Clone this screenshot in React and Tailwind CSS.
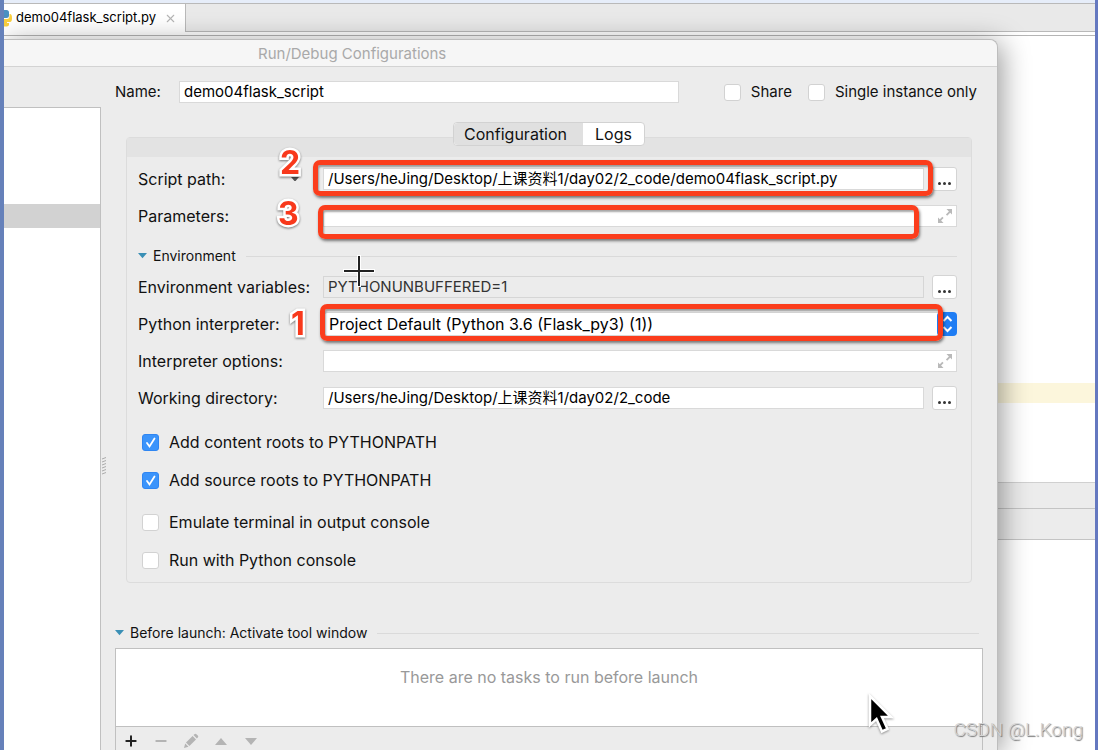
import React, { useState } from "react";
import { Plus, Minus, X } from "lucide-react";

// Text box shared by all rows of the form
const fieldStyle =
  "h-[22px] min-w-0 flex-1 border border-[#d9d9d9] bg-white px-1 pt-px text-[15px] text-black outline-none";

const PythonIcon = () => (
  <svg width="8" height="18" viewBox="0 0 8 18" aria-hidden="true">
    <path d="M0 1h2.500Q5 1 5 3.500V7q0 2-2.500 2H0z" fill="#4a90c2" />
    <path d="M5.500 5H6q2 0 2 4t-2 4H3v1h2v1.500Q5 18 0 17.500V10h3q2.500 0 2.500-3z" fill="#f9cf3e" />
  </svg>
);

const ExpandIcon = () => (
  <svg width="16" height="16" viewBox="0 0 16 16" fill="#b9b9b9" aria-hidden="true">
    <path d="M9.500 1H15v5.500l-1.800-1.800-3 3-1.300-1.300 3-3z" />
    <path d="M6.500 15H1V9.500l1.800 1.800 2.500-2.500 1.300 1.300-2.500 2.500z" />
  </svg>
);

const PencilIcon = () => (
  <svg width="16" height="16" viewBox="0 0 16 16" fill="#b4b4b4" aria-hidden="true">
    <path d="M1 15l1.200-4.500 3.300 3.300zM3 9.600l6.600-6.600 3.400 3.400-6.600 6.600zM10.500 2.100l.9-.9q1-1 2 0l1.400 1.400q1 1 0 2l-.9.9z" />
  </svg>
);

const Triangle = ({ up, className }) => (
  <svg viewBox="0 0 12 7" className={className} fill="currentColor" aria-hidden="true">
    <path d={up ? "M0 7h12L6 0z" : "M0 0h12L6 7z"} />
  </svg>
);

const Check = ({ label, checked = false }) => {
  const [on, setOn] = useState(checked);
  return (
    <label className="flex h-5 items-center gap-2.5 whitespace-nowrap">
      <span className="relative flex">
        <input
          type="checkbox"
          checked={on}
          onChange={() => setOn(!on)}
          className="size-[17px] appearance-none rounded-[3px] border border-[#d2d2d2] bg-white checked:border-[#2f86f2] checked:bg-[#3b94fb]"
        />
        {on && (
          <svg viewBox="0 0 17 17" className="pointer-events-none absolute inset-0" aria-hidden="true">
            <path d="M5 9l2.500 3.500 5-8" fill="none" stroke="white" strokeWidth="1.800" strokeLinecap="round" />
          </svg>
        )}
      </span>
      <span>{label}</span>
    </label>
  );
};

const Row = ({ id, label, children }) => (
  <div className="flex h-6 items-center">
    <label htmlFor={id} className="w-[185px] shrink-0 whitespace-nowrap">
      {label}
    </label>
    <div className="relative flex min-w-0 flex-1 items-center gap-2">{children}</div>
  </div>
);

const BrowseButton = ({ label }) => (
  <button
    aria-label={label}
    className="flex h-6 w-[25px] shrink-0 items-center justify-center gap-0.5 rounded-[3px] border border-[#d4d4d4] bg-white pt-2"
  >
    <i className="size-[3px] rounded-full bg-[#333]" />
    <i className="size-[3px] rounded-full bg-[#333]" />
    <i className="size-[3px] rounded-full bg-[#333]" />
  </button>
);

const Frame = ({ className }) => (
  <div
    className={`pointer-events-none absolute z-10 rounded-[7px] border-[5px] border-[#fb3d1c] shadow-[1px_2px_3px_rgba(0,0,0,0.5),inset_1px_2px_2px_rgba(0,0,0,0.35)] ${className}`}
  />
);

const Step = ({ n, className }) => (
  <span
    className={`pointer-events-none absolute z-10 text-[32px] leading-8 font-bold text-[#f8391c] [paint-order:stroke] [-webkit-text-stroke:5px_white] [filter:drop-shadow(0_1px_1px_rgba(0,0,0,0.5))] ${className}`}
  >
    {n}
  </span>
);

const Heading = ({ children }) => (
  <div className="flex h-5 items-center gap-1.5 text-sm">
    <Triangle className="w-[9px] text-[#3a8fb5]" />
    <span className="whitespace-nowrap">{children}</span>
    <span className="ml-1 h-px flex-1 bg-[#dadada]" />
  </div>
);

const App = () => {
  const [name, setName] = useState("demo04flask_script");
  const [script, setScript] = useState("/Users/heJing/Desktop/上课资料1/day02/2_code/demo04flask_script.py");
  const [params, setParams] = useState("");
  const [options, setOptions] = useState("");
  const [workDir, setWorkDir] = useState("/Users/heJing/Desktop/上课资料1/day02/2_code");

  return (
    <div className="relative flex h-screen flex-col overflow-hidden border-r-[3px] border-l-4 border-r-[#6478c0] border-l-[#6681ba] bg-white font-['Inter','Noto_Sans_CJK_SC',sans-serif] text-[15px] text-[#111]">
      {/* Editor tabs */}
      <div className="h-[3px] shrink-0 bg-[#e6edf9]" />
      <div className="flex h-[29px] shrink-0 border-t border-b border-[#b9b9b9] bg-[#e9e9e9]">
        <div className="flex h-7 items-center gap-1 border-r border-[#b9b9b9] bg-white pr-2 text-[13px] text-black">
          <PythonIcon />
          <span className="whitespace-nowrap">demo04flask_script.py</span>
          <button aria-label="Close tab" className="ml-1 text-[#b5b5b5]">
            <X size={13} strokeWidth={2} />
          </button>
        </div>
      </div>
      <div className="h-1 shrink-0 border-b border-[#b5b5b5] bg-white" />

      <div className="flex min-h-0 flex-1">
        {/* Dialog */}
        <div className="z-10 mt-[3px] flex min-w-0 flex-1 flex-col rounded-tr-lg border-t border-r border-[#bdbdbd] bg-[#ececec] shadow-[4px_4px_28px_rgba(0,0,0,0.4)]">
          <div className="flex h-[27px] shrink-0 items-center rounded-tr-lg border-b border-[#d3d3d3] bg-[#f6f6f6] pt-0.5 pl-[254px] text-[#a9a9a9]">
            Run/Debug Configurations
          </div>

          <div className="flex min-h-0 flex-1">
            <aside className="flex w-[97px] shrink-0 flex-col pt-10">
              <div className="flex-1 border-t border-r border-[#c0c0c0] bg-white pt-24">
                <div className="h-6 bg-[#d2d2d2]" />
              </div>
            </aside>
            <div className="flex w-1.5 shrink-0 justify-center pt-[390px]">
              <svg width="5" height="18" viewBox="0 0 5 18" aria-hidden="true">
                <path d="M0 2l4-1.500M0 5l4-1.500M0 8l4-1.500M0 11l4-1.500M0 14l4-1.500M0 17l4-1.500" stroke="#aaa" />
              </svg>
            </div>

            <main className="flex min-w-0 flex-1 flex-col pt-[13px] pr-3.5 pl-2">
              <div className="flex h-6 shrink-0 items-center">
                <label htmlFor="name" className="w-16 shrink-0 pt-px">Name:</label>
                <input id="name" value={name} onChange={(e) => setName(e.target.value)} className={fieldStyle} />
                <div className="mr-1.5 ml-[45px] flex gap-4">
                  <Check label="Share" />
                  <Check label="Single instance only" />
                </div>
              </div>

              {/* Tabs sit on the upper edge of the panel */}
              <div className="z-10 mt-[18px] flex h-6 shrink-0 self-center rounded-[4px] border border-[#d2d2d2] bg-white text-base leading-[22px]">
                <button className="rounded-l-[4px] bg-[#e0e0e0] pr-4 pl-2.5">Configuration</button>
                <button className="px-3">Logs</button>
              </div>

              <section className="mx-[11px] -mt-[9px] shrink-0 rounded-[4px] border border-[#dcdcdc] pb-3 text-base">
                <div className="h-[19px] bg-[#e3e3e3]" />
                <div className="pt-2.5 pr-3.5 pl-[11px]">
                  <div className="flex flex-col gap-[13px]">
                    <Row id="script" label="Script path:">
                      <Triangle className="absolute -left-8 w-2 text-[#555]" />
                      <Step n="2" className="-top-5 -left-[43px]" />
                      <input id="script" value={script} onChange={(e) => setScript(e.target.value)} className={fieldStyle} />
                      <BrowseButton label="Browse script" />
                      <Frame className="-top-[7px] right-6 -left-2.5 h-9" />
                    </Row>
                    <Row id="params" label="Parameters:">
                      <Step n="3" className="-top-[7px] -left-[45px]" />
                      <input id="params" value={params} onChange={(e) => setParams(e.target.value)} className={fieldStyle} />
                      <button aria-label="Expand parameters" className="absolute right-1">
                        <ExpandIcon />
                      </button>
                      <Frame className="top-0 right-[38px] -left-[5px] h-[34px]" />
                    </Row>
                  </div>

                  <div className="mt-[18px] mb-[9px]">
                    <Heading>Environment</Heading>
                  </div>

                  <div className="flex flex-col gap-[13px]">
                    <Row id="env" label="Environment variables:">
                      <input
                        id="env"
                        readOnly
                        value="PYTHONUNBUFFERED=1"
                        className="h-[22px] min-w-0 flex-1 border border-[#d6d6d6] px-1 text-[15px] text-[#333] outline-none"
                      />
                      <BrowseButton label="Edit environment variables" />
                      {/* Crosshair pointer */}
                      <svg width="32" height="32" viewBox="0 0 32 32" className="pointer-events-none absolute -top-5 left-5" aria-hidden="true">
                        <path d="M16 0v32M0 16h32" stroke="white" strokeWidth="4" />
                        <path d="M16 1v30M1 16h30" stroke="#222" strokeWidth="2" />
                      </svg>
                    </Row>
                    <Row id="interpreter" label="Python interpreter:">
                      <Step n="1" className="-top-1 -left-8" />
                      <select
                        id="interpreter"
                        className="h-6 min-w-0 flex-1 appearance-none rounded-[4px] border border-[#d6d6d6] bg-white px-[5px] text-base leading-5 text-black outline-none"
                      >
                        <option>Project Default (Python 3.6 (Flask_py3) (1))</option>
                      </select>
                      <svg width="20" height="24" viewBox="0 0 20 24" className="pointer-events-none absolute right-0" aria-hidden="true">
                        <rect width="20" height="24" rx="4" fill="#1f7df4" />
                        <path d="M6.500 9L10.500 5l4 4M6.500 15l4 4 4-4" fill="none" stroke="white" strokeWidth="2" />
                      </svg>
                      <Frame className="-top-2 right-3.5 -left-[3px] h-[37px]" />
                    </Row>
                    <Row id="options" label="Interpreter options:">
                      <input id="options" value={options} onChange={(e) => setOptions(e.target.value)} className={fieldStyle} />
                      <button aria-label="Expand options" className="absolute right-1">
                        <ExpandIcon />
                      </button>
                    </Row>
                    <Row id="workdir" label="Working directory:">
                      <input id="workdir" value={workDir} onChange={(e) => setWorkDir(e.target.value)} className={fieldStyle} />
                      <BrowseButton label="Browse directory" />
                    </Row>
                  </div>

                  <div className="mt-[22px] flex flex-col gap-[18px] pl-1">
                    <Check label="Add content roots to PYTHONPATH" checked />
                    <Check label="Add source roots to PYTHONPATH" checked />
                  </div>
                  <div className="mt-[22px] flex flex-col gap-[18px] pl-1">
                    <Check label="Emulate terminal in output console" />
                    <Check label="Run with Python console" />
                  </div>
                </div>
              </section>

              {/* Before launch */}
              <div className="mt-10 mb-[5px] shrink-0 pr-1">
                <Heading>Before launch: Activate tool window</Heading>
              </div>
              <div className="flex flex-1 flex-col border border-b-0 border-[#c0c0c0]">
                <div className="flex h-[78px] shrink-0 justify-center border-b border-[#c0c0c0] bg-white pt-4 text-base text-[#999]">
                  There are no tasks to run before launch
                </div>
                <div className="flex h-7 shrink-0 items-center gap-3.5 pl-[7px] text-[#b4b4b4]">
                  <button aria-label="Add" className="text-[#222]">
                    <Plus size={16} strokeWidth={3} />
                  </button>
                  <button aria-label="Remove">
                    <Minus size={16} strokeWidth={3} />
                  </button>
                  <button aria-label="Edit">
                    <PencilIcon />
                  </button>
                  <button aria-label="Move up" className="px-0.5">
                    <Triangle up className="w-3" />
                  </button>
                  <button aria-label="Move down" className="px-0.5">
                    <Triangle className="w-3" />
                  </button>
                </div>
              </div>
            </main>
          </div>
        </div>

        {/* Editor area behind the dialog */}
        <div className="flex w-[97px] shrink-0 flex-col">
          <div className="h-[347px]" />
          <div className="h-5 bg-[#fcf6dc]" />
          <div className="h-[79px]" />
          <div className="h-[26px] border-t border-[#d0d0d0] bg-[#ececec]" />
          <div className="h-8 border-t border-b border-[#c4c4c4] bg-[#ececec]" />
        </div>
      </div>

      {/* Mouse pointer */}
      <svg width="30" height="44" viewBox="0 0 30 44" className="pointer-events-none absolute right-[199px] bottom-3.5 z-20" aria-hidden="true">
        <path
          d="M4 4v29l6.500-6 5.500 12.500 5.500-2.500L16 25h9z"
          fill="black"
          stroke="white"
          strokeWidth="2.500"
          className="[filter:drop-shadow(0_1px_1px_rgba(0,0,0,0.4))]"
        />
      </svg>

      <div className="absolute right-3 bottom-1.5 z-20 font-['Roboto',sans-serif] text-[19px] leading-7 font-light text-[#d4d4d4] [text-shadow:1px_1px_1px_#777]">
        CSDN @L.Kong
      </div>
    </div>
  );
};

export default App;
